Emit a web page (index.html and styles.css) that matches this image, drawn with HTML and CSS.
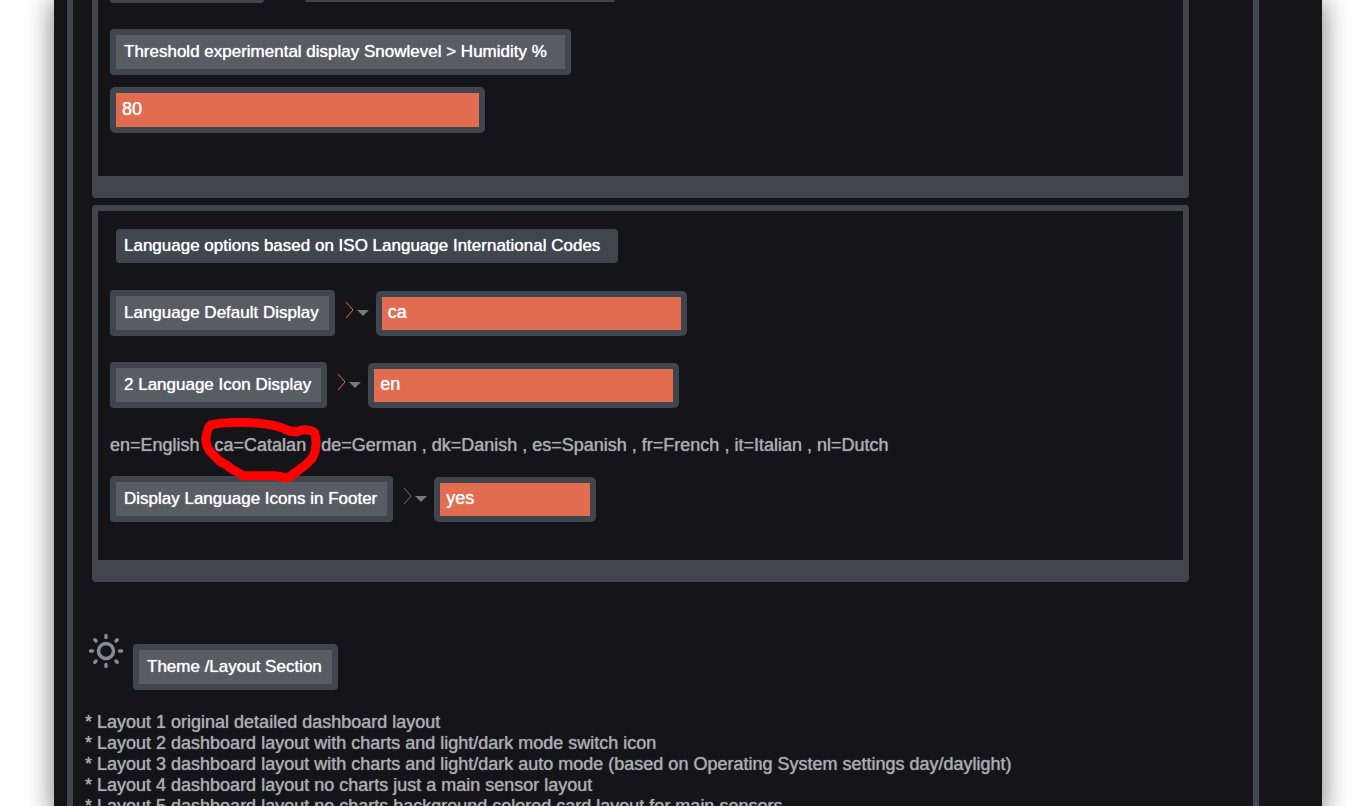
FILE: index.html
```
<!DOCTYPE html>
<html lang="en">
<head>
  <meta charset="UTF-8">
  <meta name="viewport" content="width=device-width, initial-scale=1.0">
  <title>Settings</title>
  <link rel="stylesheet" href="styles.css">
</head>
<body>
  <main class="sheet">
    <form class="settings">

      <!-- Snow level -->
      <section class="panel panel-first">
        <div class="row-end">
          <span class="label-end"></span>
          <span class="field-end"></span>
        </div>
        <label class="tag tag-long" for="humidity">Threshold experimental display Snowlevel &gt; Humidity %</label>
        <input class="field field-wide" type="text" id="humidity" value="80">
      </section>

      <!-- Language -->
      <section class="panel panel-language">
        <h2 class="panel-title">Language options based on ISO Language International Codes</h2>

        <div class="row">
          <label class="tag" for="language">Language Default Display</label>
          <svg class="chevron" viewBox="0 0 9 18"><path d="M1 1l7 8-7 8"/></svg>
          <svg class="caret" viewBox="0 0 12 6"><path d="M0 0h12L6 6z"/></svg>
          <select class="field field-select" id="language">
            <option>ca</option>
          </select>
        </div>

        <div class="row row-second">
          <label class="tag" for="language2">2 Language Icon Display</label>
          <svg class="chevron" viewBox="0 0 9 18"><path d="M1 1l7 8-7 8"/></svg>
          <svg class="caret" viewBox="0 0 12 6"><path d="M0 0h12L6 6z"/></svg>
          <select class="field field-select" id="language2">
            <option>en</option>
          </select>
        </div>

        <p class="codes">en=English , <span class="marked">ca=Catalan<svg class="marker" viewBox="0 0 450 270"><path d="M62 60C90 52 160 50 200 54S250 60 275 68L298 78 320 81 335 75C350 73 368 76 374 84C380 100 378 125 375 140L366 160 350 177 320 200 292 219 255 212H160L125 192 108 179 88 168 66 145C52 130 46 112 48 98S52 68 62 60Z"/></svg></span> , de=German , dk=Danish , es=Spanish , fr=French , it=Italian , nl=Dutch</p>

        <div class="row">
          <label class="tag" for="icons">Display Language Icons in Footer</label>
          <svg class="chevron chevron-muted" viewBox="0 0 9 18"><path d="M1 1l7 8-7 8"/></svg>
          <svg class="caret" viewBox="0 0 12 6"><path d="M0 0h12L6 6z"/></svg>
          <select class="field field-short" id="icons">
            <option>yes</option>
          </select>
        </div>
      </section>

      <!-- Theme and layout -->
      <section class="theme">
        <div class="theme-head">
          <svg class="sun" viewBox="0 0 36 36">
            <circle cx="18" cy="18" r="7.5"/>
            <path d="M18 2.500v2M18 31.500v2M2.500 18h2M31.500 18h2M6.800 6.800l1.200 1.200M28 28l1.200 1.200M6.800 29.200l1.200-1.200M28 8l1.200-1.200"/>
          </svg>
          <h2 class="tag">Theme /Layout Section</h2>
        </div>
        <p class="layouts">
          * Layout 1 original detailed dashboard layout<br>
          * Layout 2 dashboard layout with charts and light/dark mode switch icon<br>
          * Layout 3 dashboard layout with charts and light/dark auto mode (based on Operating System settings day/daylight)<br>
          * Layout 4 dashboard layout no charts just a main sensor layout<br>
          * Layout 5 dashboard layout no charts background colored card layout for main sensors
        </p>
      </section>

    </form>
  </main>
</body>
</html>
```

FILE: styles.css
```
* {
  box-sizing: border-box;
}

body {
  margin: 0;
  height: 100vh;
  overflow: hidden;
  background: #fff;
  color: #aaacb0;
  font-family: "Liberation Sans", Arial, sans-serif;
  font-size: 18px;
  line-height: 21px;
}

h2, p {
  margin: 0;
  font-size: 18px;
  font-weight: normal;
}

/* Page frame */
.sheet {
  min-height: 100vh;
  margin: 0 40px 0 54px;
  padding: 0 63px 0 13px;
  background: #151419;
  box-shadow: 0 0 26px rgba(0, 0, 0, 0.55);
}

.settings {
  min-height: 100vh;
  padding: 0 64px 0 12px;
  border: solid #40464d;
  border-width: 0 6px;
}

/* Panels */
.panel {
  display: flex;
  flex-direction: column;
  align-items: flex-start;
  margin-left: 7px;
  padding: 18px 12px 38px;
  border: 6px solid #40464d;
  border-bottom-width: 22px;
  border-radius: 4px;
}

.panel-first {
  padding-top: 0;
  padding-bottom: 43px;
  border-top: 0;
  border-top-left-radius: 0;
  border-top-right-radius: 0;
  gap: 12px;
}

.panel-language {
  margin-top: 7px;
}

.panel-title {
  margin: 0 0 27px 6px;
  padding: 6px 18px 7px 8px;
  border-radius: 4px;
  background: #40464d;
  color: #fff;
  font-size: 17px;
}

.row-end {
  display: flex;
  gap: 41px;
  margin-bottom: 14px;
}

.label-end,
.field-end {
  width: 154px;
  height: 3px;
  border-radius: 0 0 4px 4px;
  background: #40464d;
}

.field-end {
  width: 310px;
  height: 2px;
}

/* Form controls */
.row {
  display: flex;
  align-items: center;
}

.row-second {
  margin-top: 26px;
}

.tag {
  padding: 6px 10px 7px 8px;
  border: 6px solid #40464d;
  border-radius: 4px;
  background: #585d64;
  color: #fff;
  font-size: 17px;
}

.tag-long {
  padding-right: 18px;
}

.field {
  height: 45px;
  padding: 0 6px 1px;
  border: 6px solid #40464d;
  border-radius: 5px;
  background: #e26c4f;
  color: #fff;
  font: inherit;
  appearance: none;
}

.field-wide {
  width: 375px;
  height: 46px;
}

.field-select {
  width: 311px;
}

.field-short {
  width: 162px;
}

.tag,
.panel-title,
.field,
.codes,
.layouts {
  text-shadow: 0 0 1px currentColor;
}

.chevron {
  width: 9px;
  height: 18px;
  margin: 0 3px 6px 10px;
  fill: none;
  stroke: #e26c4f;
}

.chevron-muted {
  stroke: #6c6d72;
}

.caret {
  width: 12px;
  height: 6px;
  margin-right: 7px;
  fill: #77787c;
}

/* Language codes */
.codes {
  margin: 27px 0 20px;
}

.marked {
  position: relative;
}

.marker {
  position: absolute;
  top: -30px;
  left: -25px;
  width: 150px;
  height: 90px;
  fill: none;
  stroke: #f00;
  stroke-width: 27;
  stroke-linejoin: round;
}

/* Theme section */
.theme {
  margin-top: 51px;
}

.theme-head {
  display: flex;
  align-items: flex-start;
  gap: 9px;
  margin-left: 3px;
}

.theme-head .tag {
  margin-top: 11px;
}

.sun {
  width: 36px;
  height: 36px;
  fill: none;
  stroke: #8a8b90;
  stroke-width: 3.5;
  stroke-linecap: round;
}

.layouts {
  margin-top: 22px;
}
```
